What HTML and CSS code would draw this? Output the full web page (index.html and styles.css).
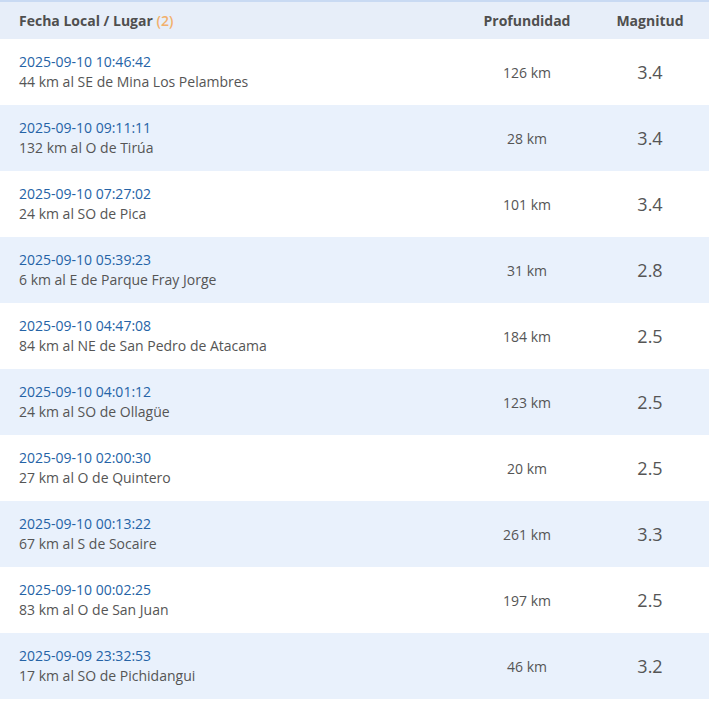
FILE: index.html
```html
<!DOCTYPE html>
<html lang="es">
<head>
<meta charset="utf-8">
<title>Sismos</title>
<link rel="stylesheet" href="styles.css">
</head>
<body>
<div class="table">
  <div class="row head">
    <div class="c1">Fecha Local / Lugar <span class="count">(2)</span></div>
    <div class="c2">Profundidad</div>
    <div class="c3">Magnitud</div>
  </div>
  <div class="row">
    <div class="c1"><a class="date">2025-09-10 10:46:42</a><span class="place">44 km al SE de Mina Los Pelambres</span></div>
    <div class="c2">126 km</div><div class="c3 mag">3.4</div>
  </div>
  <div class="row alt">
    <div class="c1"><a class="date">2025-09-10 09:11:11</a><span class="place">132 km al O de Tirúa</span></div>
    <div class="c2">28 km</div><div class="c3 mag">3.4</div>
  </div>
  <div class="row">
    <div class="c1"><a class="date">2025-09-10 07:27:02</a><span class="place">24 km al SO de Pica</span></div>
    <div class="c2">101 km</div><div class="c3 mag">3.4</div>
  </div>
  <div class="row alt">
    <div class="c1"><a class="date">2025-09-10 05:39:23</a><span class="place">6 km al E de Parque Fray Jorge</span></div>
    <div class="c2">31 km</div><div class="c3 mag">2.8</div>
  </div>
  <div class="row">
    <div class="c1"><a class="date">2025-09-10 04:47:08</a><span class="place">84 km al NE de San Pedro de Atacama</span></div>
    <div class="c2">184 km</div><div class="c3 mag">2.5</div>
  </div>
  <div class="row alt">
    <div class="c1"><a class="date">2025-09-10 04:01:12</a><span class="place">24 km al SO de Ollagüe</span></div>
    <div class="c2">123 km</div><div class="c3 mag">2.5</div>
  </div>
  <div class="row">
    <div class="c1"><a class="date">2025-09-10 02:00:30</a><span class="place">27 km al O de Quintero</span></div>
    <div class="c2">20 km</div><div class="c3 mag">2.5</div>
  </div>
  <div class="row alt">
    <div class="c1"><a class="date">2025-09-10 00:13:22</a><span class="place">67 km al S de Socaire</span></div>
    <div class="c2">261 km</div><div class="c3 mag">3.3</div>
  </div>
  <div class="row">
    <div class="c1"><a class="date">2025-09-10 00:02:25</a><span class="place">83 km al O de San Juan</span></div>
    <div class="c2">197 km</div><div class="c3 mag">2.5</div>
  </div>
  <div class="row alt">
    <div class="c1"><a class="date">2025-09-09 23:32:53</a><span class="place">17 km al SO de Pichidangui</span></div>
    <div class="c2">46 km</div><div class="c3 mag">3.2</div>
  </div>
</div>
</body>
</html>
```
FILE: styles.css
```css
html, body {
  margin: 0;
  padding: 0;
  background: #ffffff;
}
body {
  font-family: "Open Sans", "Liberation Sans", sans-serif;
  font-size: 14px;
  color: #555555;
}
.table {
  width: 709px;
  border-top: 2px solid #c9daf3;
}
.row {
  display: grid;
  grid-template-columns: 1fr 128px 118px;
  align-items: center;
  height: 66px;
  background: #ffffff;
}
.row.alt {
  background: #e9f1fc;
}
.row.head {
  height: 37px;
  background: #e7eef9;
  font-weight: bold;
  color: #4f4f4f;
}
.c1 {
  padding-left: 19px;
  display: flex;
  flex-direction: column;
}
.head .c1 {
  display: block;
}
.count {
  color: #f2b06c;
  font-weight: 600;
}
.c2, .c3 {
  text-align: center;
}
.date {
  color: #2563a6;
  line-height: 20px;
}
.place {
  color: #555555;
  line-height: 20px;
}
.mag {
  font-size: 18px;
  color: #555555;
}
```
